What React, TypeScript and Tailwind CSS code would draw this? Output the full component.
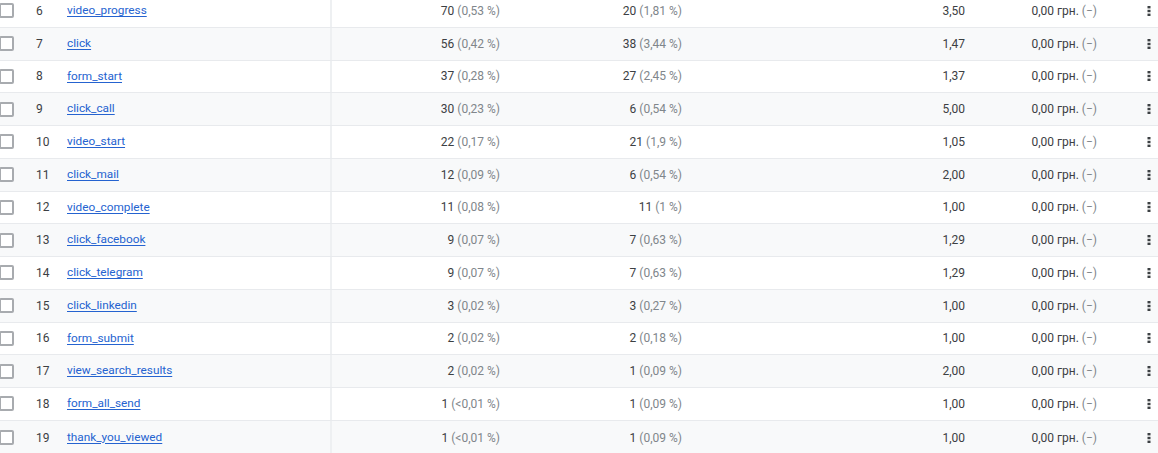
import React from "react";

type Row = {
  n: number;
  name: string;
  a: string;
  ap: string;
  b: string;
  bp: string;
  ratio: string;
};

const rows: Row[] = [
  { n: 6, name: "video_progress", a: "70", ap: "(0,53 %)", b: "20", bp: "(1,81 %)", ratio: "3,50" },
  { n: 7, name: "click", a: "56", ap: "(0,42 %)", b: "38", bp: "(3,44 %)", ratio: "1,47" },
  { n: 8, name: "form_start", a: "37", ap: "(0,28 %)", b: "27", bp: "(2,45 %)", ratio: "1,37" },
  { n: 9, name: "click_call", a: "30", ap: "(0,23 %)", b: "6", bp: "(0,54 %)", ratio: "5,00" },
  { n: 10, name: "video_start", a: "22", ap: "(0,17 %)", b: "21", bp: "(1,9 %)", ratio: "1,05" },
  { n: 11, name: "click_mail", a: "12", ap: "(0,09 %)", b: "6", bp: "(0,54 %)", ratio: "2,00" },
  { n: 12, name: "video_complete", a: "11", ap: "(0,08 %)", b: "11", bp: "(1 %)", ratio: "1,00" },
  { n: 13, name: "click_facebook", a: "9", ap: "(0,07 %)", b: "7", bp: "(0,63 %)", ratio: "1,29" },
  { n: 14, name: "click_telegram", a: "9", ap: "(0,07 %)", b: "7", bp: "(0,63 %)", ratio: "1,29" },
  { n: 15, name: "click_linkedin", a: "3", ap: "(0,02 %)", b: "3", bp: "(0,27 %)", ratio: "1,00" },
  { n: 16, name: "form_submit", a: "2", ap: "(0,02 %)", b: "2", bp: "(0,18 %)", ratio: "1,00" },
  { n: 17, name: "view_search_results", a: "2", ap: "(0,02 %)", b: "1", bp: "(0,09 %)", ratio: "2,00" },
  { n: 18, name: "form_all_send", a: "1", ap: "(<0,01 %)", b: "1", bp: "(0,09 %)", ratio: "1,00" },
  { n: 19, name: "thank_you_viewed", a: "1", ap: "(<0,01 %)", b: "1", bp: "(0,09 %)", ratio: "1,00" },
];

const Kebab = () => (
  <svg width="4" height="10" viewBox="0 0 4 10" className="text-[#3c4043]">
    <rect x="0.5" y="0" width="3" height="2.4" fill="currentColor" />
    <rect x="0.5" y="3.8" width="3" height="2.4" fill="currentColor" />
    <rect x="0.5" y="7.6" width="3" height="2.4" fill="currentColor" />
  </svg>
);

const App = () => {
  return (
    <div className="w-[1158px] h-[453px] overflow-hidden bg-white font-['Roboto',sans-serif] text-[12px] text-[#3c4043]">
      <div className="-mt-[5px]">
        {rows.map((r, i) => (
          <div
            key={r.n}
            className={`flex items-center h-[32.75px] border-b border-[#e8eaed] last:border-b-0 last:h-[34px] ${i % 2 === 1 ? "bg-[#f8f9fa]" : "bg-white"}`}
          >
            <div className="w-[36px] h-full flex items-center">
              <div className="-ml-[1px] size-[15px] rounded-[2px] border-2 border-[#a8abaf] bg-white" />
            </div>
            <div className="w-[31px]">{r.n}</div>
            <div className="w-[263px] h-full flex items-center">
              <a href="#" className="text-[11.8px] text-[#2563d0] underline underline-offset-[1.5px]">
                {r.name}
              </a>
            </div>
            <div className="w-[2px] h-full bg-[#eef0f2]" />
            <div className="w-[168px] text-right">
              {r.a} <span className="text-[#80868b]">{r.ap}</span>
            </div>
            <div className="w-[182px] text-right">
              {r.b} <span className="text-[#80868b]">{r.bp}</span>
            </div>
            <div className="w-[283px] text-right">{r.ratio}</div>
            <div className="w-[132px] text-right">
              0,00 грн. <span className="text-[#80868b]">(−)</span>
            </div>
            <div className="flex-1 flex justify-end pr-[7px]">
              <Kebab />
            </div>
          </div>
        ))}
      </div>
    </div>
  );
};

export default App;
